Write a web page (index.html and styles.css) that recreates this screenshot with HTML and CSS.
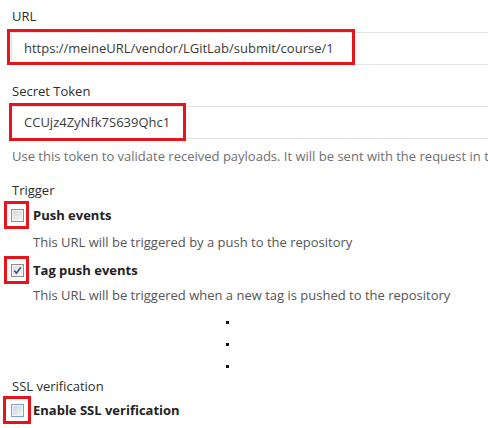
FILE: index.html
```html
<!DOCTYPE html>
<html>
<head>
<meta charset="utf-8">
<link rel="stylesheet" href="styles.css">
</head>
<body>
<div class="page">
  <div class="label label-url">URL</div>
  <div class="field">
    <div class="input">https://meineURL/vendor/LGitLab/submit/course/1</div>
    <div class="hl hl-url"></div>
  </div>

  <div class="label label-token">Secret Token</div>
  <div class="field">
    <div class="input">CCUjz4ZyNfk7S639Qhc1</div>
    <div class="hl hl-token"></div>
  </div>
  <div class="help">Use this token to validate received payloads. It will be sent with the request in the X-Gitlab-Token HTTP header.</div>

  <div class="label label-trigger">Trigger</div>
  <div class="check-row row-push">
    <span class="cbox"><span class="hl hl-cb"></span></span>
    <span class="check-label">Push events</span>
  </div>
  <div class="desc desc-push">This URL will be triggered by a push to the repository</div>

  <div class="check-row row-tag">
    <span class="cbox checked">
      <svg viewBox="0 0 11 11" width="11" height="11"><path d="M2.2 5.6 L4.4 8.2 L8.8 2.2" fill="none" stroke="#3a4f8f" stroke-width="1.6"/></svg>
      <span class="hl hl-cb"></span>
    </span>
    <span class="check-label">Tag push events</span>
  </div>
  <div class="desc desc-tag">This URL will be triggered when a new tag is pushed to the repository</div>

  <div class="dots">
    <span class="dot"></span>
    <span class="dot"></span>
    <span class="dot"></span>
  </div>

  <div class="label label-ssl">SSL verification</div>
  <div class="check-row row-ssl">
    <span class="cbox focus"><span class="hl hl-cb hl-ssl"></span></span>
    <span class="check-label">Enable SSL verification</span>
  </div>
</div>
</body>
</html>
```

FILE: styles.css
```css
html, body {
  margin: 0;
  padding: 0;
  background: #fff;
  overflow: hidden;
}
.page {
  width: 488px;
  height: 428px;
  overflow: hidden;
  padding-left: 12px;
  box-sizing: border-box;
  font-family: "Open Sans", "Noto Sans", sans-serif;
  font-size: 13px;
  color: #333;
}
.label {
  line-height: 18px;
  height: 18px;
  color: #2e2e2e;
}
.label-url { margin-top: 7px; }
.label-token { margin-top: 17px; }
.label-trigger { margin-top: 16px; }
.label-ssl { margin-top: 9px; }

.field {
  position: relative;
  margin-left: -1px;
  margin-right: -40px;
}
.label-url + .field { margin-top: 7px; }
.label-token + .field { margin-top: 6px; }
.input {
  height: 31px;
  line-height: 31px;
  border: 1px solid #e3e3e3;
  border-right: none;
  padding-left: 12px;
  color: #3a3a3a;
  white-space: nowrap;
}
.hl {
  position: absolute;
  border: 3px solid #e8141c;
  box-sizing: border-box;
  pointer-events: none;
}
.hl-url { left: -4px; top: -3px; width: 348px; height: 36px; }
.hl-token { left: -2px; top: -3px; width: 177px; height: 38px; }

.help {
  margin-top: 8px;
  line-height: 18px;
  color: #707070;
  white-space: nowrap;
}

.check-row {
  display: flex;
  align-items: center;
  height: 18px;
  margin-left: -1px;
}
.row-push { margin-top: 7px; }
.row-tag { margin-top: 10px; }
.row-ssl { margin-top: 6px; }
.cbox {
  position: relative;
  width: 13px;
  height: 13px;
  box-sizing: border-box;
  border: 1px solid #8f8f8f;
  background: linear-gradient(135deg, #d2d2d2 0%, #eeeeee 70%, #fbfbfb 100%);
  box-shadow: inset 0 0 0 1px #f4f4f4;
  flex: none;
  display: flex;
  align-items: center;
  justify-content: center;
}
.cbox.checked {
  background: linear-gradient(135deg, #dcdcdc 0%, #f2f2f2 70%, #fdfdfd 100%);
}
.cbox.checked svg { display: block; }
.cbox.focus {
  border-color: #7aa0d4;
  background: linear-gradient(135deg, #c9d3e0 0%, #e6ebf2 70%, #f6f8fb 100%);
}
.hl-cb { left: -8px; top: -9px; width: 25px; height: 28px; }
.hl-ssl { left: -9px; top: -9px; width: 28px; height: 28px; }
.check-label {
  margin-left: 9px;
  font-weight: bold;
  color: #222;
}
.desc {
  padding-left: 21px;
  line-height: 18px;
  color: #555;
}
.desc-push { margin-top: 9px; }
.desc-tag { margin-top: 7px; }
.dots {
  display: flex;
  flex-direction: column;
  align-items: flex-start;
  gap: 19px;
  padding-left: 214px;
  margin-top: 17px;
}
.dot {
  width: 3px;
  height: 3px;
  background: #111;
}
```
